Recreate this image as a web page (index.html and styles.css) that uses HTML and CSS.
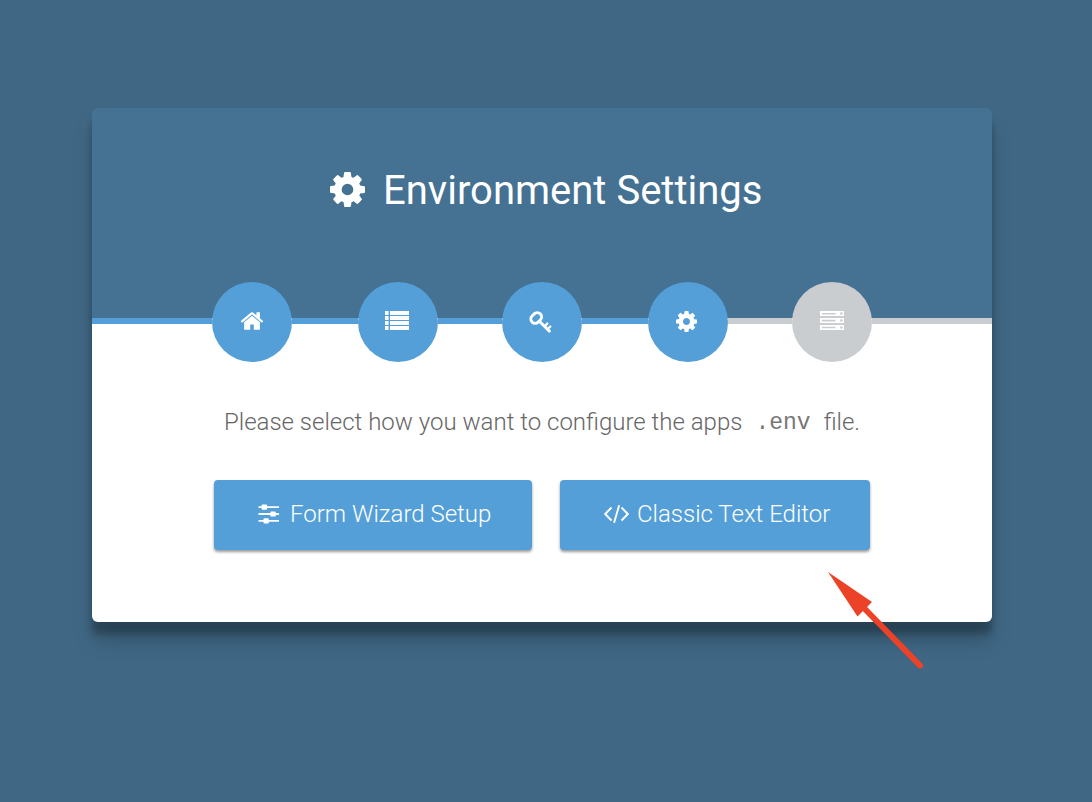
FILE: index.html
```html
<!DOCTYPE html>
<html lang="en">
<head>
<meta charset="utf-8">
<title>Environment Settings</title>
<link rel="stylesheet" href="styles.css">
</head>
<body>
<svg class="defs" width="0" height="0">
  <symbol id="cog" viewBox="0 128 1536 1536"><path d="M1024 896q0-106-75-181t-181-75-181 75-75 181 75 181 181 75 181-75 75-181zm512-109v222q0 12-8 23t-20 13l-185 28q-19 54-39 91 35 50 107 138 10 12 10 25t-9 23q-27 37-99 108t-94 71q-12 0-26-9l-138-108q-44 23-91 38-16 136-29 186-7 28-36 28h-222q-14 0-24.500-8.500t-11.500-21.500l-28-184q-49-16-90-37l-141 107q-10 9-25 9-14 0-25-11-126-114-165-168-7-10-7-23 0-12 8-23 15-21 51-66.500t54-70.500q-27-50-41-99l-183-27q-13-2-21-12.500t-8-23.500v-222q0-12 8-23t19-13l186-28q14-46 39-92-40-57-107-138-10-12-10-24 0-10 9-23 26-36 98.500-107.500t94.500-71.500q13 0 26 10l138 107q44-23 91-38 16-136 29-186 7-28 36-28h222q14 0 24.500 8.500t11.500 21.500l28 184q49 16 90 37l142-107q9-9 24-9 13 0 25 10 129 119 165 170 7 8 7 22 0 12-8 23-15 21-51 66.500t-54 70.500q26 50 41 98l183 28q13 2 21 12.500t8 23.500z"/></symbol>
</svg>
<main class="card">
  <header class="header">
    <h1 class="title"><svg class="title-icon"><use href="#cog"/></svg><span class="title-text">Environment Settings</span></h1>
  </header>
  <nav class="steps">
    <span class="line lead"></span>
    <span class="step"><svg class="icon home" viewBox="32 253 1600 1283"><path d="M1408 992v480q0 26-19 45t-45 19h-384v-384h-256v384h-384q-26 0-45-19t-19-45v-480q0-1 .5-3t.5-3l575-474 575 474q1 2 1 6zm223-69l-62 74q-8 9-21 11h-3q-13 0-21-7l-692-577-692 577q-12 8-24 7-13-2-21-11l-62-74q-8-10-7-23.500t11-21.500l719-599q32-26 76-26t76 26l244 204v-195q0-14 9-23t23-9h192q14 0 23 9t9 23v408l219 182q10 8 11 21.500t-7 23.500z"/></svg></span>
    <span class="line wide"></span>
    <span class="step"><svg class="icon list" viewBox="0 0 24 19"><path d="M0 0h3.600v4H0zM5 0h19v4H5zM0 5h3.600v4H0zM5 5h19v4H5zM0 10h3.600v4H0zM5 10h19v4H5zM0 15h3.600v4H0zM5 15h19v4H5z"/></svg></span>
    <span class="line"></span>
    <span class="step"><svg class="icon key" viewBox="0 0 23 22"><g fill="none" stroke="#fff" stroke-width="2.900" stroke-linecap="round"><rect x="1.400" y="2.700" width="11.600" height="8.600" rx="4.300" transform="rotate(-45 7.200 7)"/><path d="M10.300 10.200 20.400 20.100"/><path stroke-width="2.300" d="M16.200 14.800l2.100-2.300M19 17.800l2.300-2.300"/></g></svg></span>
    <span class="line wide"></span>
    <span class="step"><svg class="icon cog"><use href="#cog"/></svg></span>
    <span class="line pending"></span>
    <span class="step pending"><svg class="icon server" viewBox="0 0 24 19"><path d="M0 0h24v5H0zM0 7h24v5H0zM0 14h24v5H0z"/><path class="slot" d="M1.800 2.700h13.700M1.800 9.600h13.700M1.800 16.500h13.700"/><g class="led"><circle cx="21.400" cy="2.600" r="1.300"/><circle cx="21.400" cy="9.500" r="1.300"/><circle cx="21.400" cy="16.500" r="1.300"/></g></svg></span>
    <span class="line lead pending"></span>
  </nav>
  <section class="content">
    <p class="message"><span class="lead-text">Please select how you want to configure the apps</span><code class="code">.env</code><span class="tail">file.</span></p>
    <div class="actions">
      <a class="button wizard"><svg class="sliders" viewBox="0 0 22 20"><path class="rail" d="M.5 3.100H21M.5 10H21M.5 16.900H21"/><rect x="3.700" y=".5" width="5.300" height="5.200" rx=".7"/><rect x="12.400" y="7.400" width="5.300" height="5.200" rx=".7"/><rect x="5.500" y="14.300" width="5.300" height="5.200" rx=".7"/></svg><span class="wizard-text">Form Wizard Setup</span></a>
      <a class="button classic"><svg class="angle" viewBox="0 0 25 20"><path d="M7.500 3.500 1.200 10l6.300 6.500M17.500 3.500l6.300 6.500-6.300 6.500M15.200 1.200 10.100 18.800"/></svg><span class="classic-text">Classic Text Editor</span></a>
    </div>
  </section>
</main>
<svg class="arrow" viewBox="0 0 100 100"><path d="M3 2 47 32 32.500 46.500z"/><path class="shaft" d="M37 36 95 95.500"/></svg>
</body>
</html>
```
FILE: styles.css
```css
body {
  margin: 0;
  height: 802px;
  overflow: hidden;
  position: relative;
  background: #406885;
  font-family: Roboto, "Open Sans", sans-serif;
  font-weight: 300;
}
.defs { position: absolute; }
svg { fill: #fff; flex: none; }
.card {
  width: 900px;
  height: 514px;
  margin: 108px 0 0 92px;
  border-radius: 6px;
  background: linear-gradient(#457192 210px, #fff 210px);
  box-shadow: 0 20px 20px rgba(0, 0, 0, .19), 0 12px 6px rgba(0, 0, 0, .23);
  display: flow-root;
}
.header {
  height: 210px;
  box-sizing: border-box;
  padding-top: 59px;
}
.title {
  margin: 0;
  padding-left: 238px;
  display: flex;
  align-items: center;
  color: #fff;
  font-size: 40px;
  font-weight: 400;
  line-height: 48px;
  white-space: nowrap;
}
.title-icon { width: 35px; height: 35px; margin: 0 18px 3px 0; }
.steps {
  height: 80px;
  margin-top: -36px;
  display: flex;
  align-items: center;
}
.line { width: 64px; height: 6px; margin-bottom: 2px; background: #549fd7; }
.line.wide { width: 66px; }
.line.lead { width: 120px; }
.step {
  width: 80px;
  height: 80px;
  border-radius: 50%;
  background: #549fd7;
  display: flex;
  align-items: center;
  justify-content: center;
}
.line.pending, .step.pending { background: #cacdd0; }
.icon { margin-bottom: 2px; }
.home { width: 22px; height: 18px; }
.list, .server { width: 24px; height: 19px; margin-bottom: 3px; }
.list { margin-right: 2px; }
.key { width: 23px; height: 22px; margin: 0 3px 0 0; }
.cog { width: 21px; height: 21px; margin-right: 3px; }
.slot { stroke: #cacdd0; stroke-width: 1.600; }
.led { fill: #cacdd0; }
.message {
  margin: 42px 0 0 132px;
  display: flex;
  color: #666;
  font-size: 24px;
  line-height: 36px;
  white-space: nowrap;
}
.code {
  margin: 0 13px 0 13px;
  padding-top: 1px;
  font-family: "Courier New", "Liberation Mono", monospace;
  font-size: 23px;
  color: #777;
}
.actions {
  margin: 39px 0 0 122px;
  display: flex;
  gap: 28px;
}
.button {
  height: 70px;
  box-sizing: border-box;
  padding: 0 0 2px 44px;
  border-radius: 4px;
  background: #549fd7;
  box-shadow: 0 2px 3px rgba(0, 0, 0, .4);
  display: flex;
  align-items: center;
  color: #fff;
  font-size: 24px;
  white-space: nowrap;
}
.wizard { width: 318px; }
.classic { width: 310px; }
.sliders { width: 22px; height: 20px; margin: 0 10px 0 0; }
.rail { stroke: #fff; stroke-width: 1.800; }
.angle { width: 25px; height: 20px; margin: 0 8px 0 0; }
.angle path { fill: none; stroke: #fff; stroke-width: 1.900; }
.arrow {
  position: absolute;
  left: 825px;
  top: 570px;
  width: 100px;
  height: 100px;
  fill: #ec4227;
}
.shaft { stroke: #ec4227; stroke-width: 6; stroke-linecap: round; }
```
